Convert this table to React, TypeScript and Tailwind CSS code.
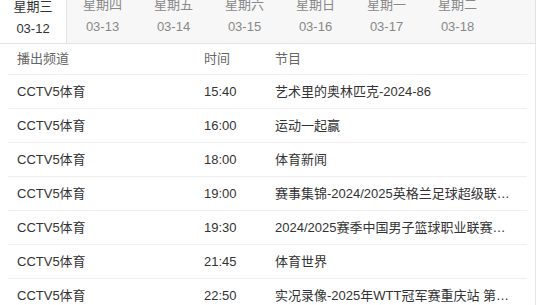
const days = [
  { day: '星期三', date: '03-12', active: true },
  { day: '星期四', date: '03-13' },
  { day: '星期五', date: '03-14' },
  { day: '星期六', date: '03-15' },
  { day: '星期日', date: '03-16' },
  { day: '星期一', date: '03-17' },
  { day: '星期二', date: '03-18' },
];

const rows = [
  { time: '15:40', title: '艺术里的奥林匹克-2024-86' },
  { time: '16:00', title: '运动一起赢' },
  { time: '18:00', title: '体育新闻' },
  { time: '19:00', title: '赛事集锦-2024/2025英格兰足球超级联赛第28轮' },
  { time: '19:30', title: '2024/2025赛季中国男子篮球职业联赛常规赛' },
  { time: '21:45', title: '体育世界' },
  { time: '22:50', title: '实况录像-2025年WTT冠军赛重庆站 第一比赛日' },
];

export default function App() {
  return (
    <div
      className="w-[542px] h-[305px] overflow-hidden bg-white text-[13px]"
      style={{ fontFamily: '"Liberation Sans", Arial, "Noto Sans CJK SC", sans-serif' }}
    >
      <div className="w-[536px]">
        {/* date tabs */}
        <div className="flex h-[44px] bg-[#f7f7f7] border-b border-r border-[#e3e3e3] overflow-hidden">
          {days.map((d, i) => (
            <div
              key={d.date}
              className={
                'flex flex-col items-center justify-end pb-[5px] leading-[22px] shrink-0 ' +
                (i === 0 ? 'w-[67px] ' : 'w-[71px] ') +
                (d.active ? 'bg-white text-[#333] border-r border-[#e3e3e3] h-[45px]' : 'text-[#888]')
              }
            >
              <span>{d.day}</span>
              <span>{d.date}</span>
            </div>
          ))}
        </div>

        {/* schedule table */}
        <div className="border-r border-[#e8e8e8] pl-2 pr-2 h-[261px]">
          <div className="flex h-[31px] items-center border-b border-[#eeeeee] text-[#666]">
            <div className="w-[187px] pl-[9px]">播出频道</div>
            <div className="w-[80px] pl-[9px]">时间</div>
            <div className="flex-1">节目</div>
          </div>
          {rows.map((r) => (
            <div key={r.time} className="flex h-[34px] items-center border-b border-[#eeeeee] text-[#333]">
              <div className="w-[187px] pl-[9px]">CCTV5体育</div>
              <div className="w-[80px] pl-[9px]">{r.time}</div>
              <div className="w-[236px] truncate">{r.title}</div>
            </div>
          ))}
        </div>
      </div>
    </div>
  );
}
